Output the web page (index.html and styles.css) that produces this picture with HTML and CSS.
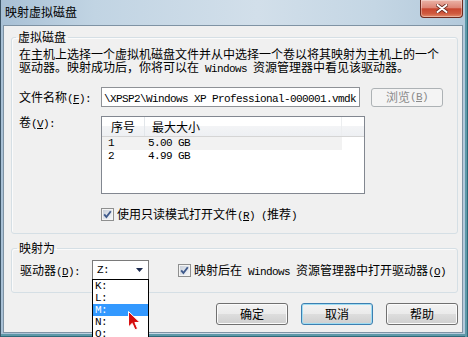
FILE: index.html
```html
<!DOCTYPE html>
<html lang="zh-CN">
<head>
<meta charset="utf-8">
<title>映射虚拟磁盘</title>
<link rel="stylesheet" href="styles.css">
</head>
<body>
<div class="window">
  <div class="titlebar">
    <span class="title">映射虚拟磁盘</span>
    <div class="close">
      <svg width="12" height="9" viewBox="0 0 12 9">
        <path d="M1.5 1 L10.5 8 M10.5 1 L1.5 8" stroke="#6a2a20" stroke-width="3.6" stroke-linecap="round"/>
        <path d="M1.5 1 L10.5 8 M10.5 1 L1.5 8" stroke="#ffffff" stroke-width="2" stroke-linecap="round"/>
      </svg>
    </div>
  </div>
  <div class="client">
    <fieldset class="group g1">
      <legend>虚拟磁盘</legend>
      <div class="desc">
        <div class="line">在主机上选择一个虚拟机磁盘文件并从中选择一个卷以将其映射为主机上的一个</div>
        <div class="line">驱动器。映射成功后，你将可以在<span class="m"> Windows </span>资源管理器中看见该驱动器。</div>
      </div>
      <div class="file-row">
        <span class="lbl">文件名称<span class="m">(<u>F</u>):</span></span>
        <div class="textbox"><span class="m">\XPSP2\Windows XP Professional-000001.vmdk</span></div>
        <div class="btn disabled browse">浏览<span class="m">(<u>B</u>)</span></div>
      </div>
      <div class="vol-row">
        <span class="lbl">卷<span class="m">(<u>V</u>):</span></span>
        <div class="listview">
          <div class="lv-head">
            <div class="c1">序号</div>
            <div class="c2">最大大小</div>
          </div>
          <div class="lv-row sel"><div class="c1 m">1</div><div class="c2 m">5.00 GB</div></div>
          <div class="lv-row"><div class="c1 m">2</div><div class="c2 m">4.99 GB</div></div>
        </div>
      </div>
      <div class="check-row ro">
        <svg class="cb" width="13" height="13" viewBox="0 0 13 13">
          <defs><linearGradient id="cbg1" x1="0" y1="0" x2="1" y2="1"><stop offset="0" stop-color="#c9d0da"/><stop offset="1" stop-color="#f4f6f9"/></linearGradient></defs>
          <rect x="0.5" y="0.5" width="12" height="12" fill="#f4f4f4" stroke="#8e8f8f"/>
          <rect x="2" y="2" width="9" height="9" fill="url(#cbg1)"/>
          <path d="M3.2 6.4 L5.4 9 L9.8 3.2" fill="none" stroke="#3f5a8c" stroke-width="1.9"/>
        </svg>
        <span>使用只读模式打开文件<span class="m">(<u>R</u>) (</span>推荐<span class="m">)</span></span>
      </div>
    </fieldset>
    <fieldset class="group g2">
      <legend>映射为</legend>
      <div class="drive-row">
        <span class="lbl2">驱动器<span class="m">(<u>D</u>):</span></span>
        <div class="combo-wrap">
          <div class="combo">
            <span class="m">Z:</span>
            <svg class="arrow" width="7" height="4" viewBox="0 0 7 4"><path d="M0 0 H7 L3.5 4 Z" fill="#1b2a4e"/></svg>
          </div>
          <ul class="dropdown">
            <li class="m">K:</li>
            <li class="m">L:</li>
            <li class="m hl">M:</li>
            <li class="m">N:</li>
            <li class="m">O:</li>
          </ul>
        </div>
        <div class="check-row open">
          <svg class="cb" width="13" height="13" viewBox="0 0 13 13">
            <defs><linearGradient id="cbg2" x1="0" y1="0" x2="1" y2="1"><stop offset="0" stop-color="#c9d0da"/><stop offset="1" stop-color="#f4f6f9"/></linearGradient></defs>
            <rect x="0.5" y="0.5" width="12" height="12" fill="#f4f4f4" stroke="#8e8f8f"/>
            <rect x="2" y="2" width="9" height="9" fill="url(#cbg2)"/>
            <path d="M3.2 6.4 L5.4 9 L9.8 3.2" fill="none" stroke="#3f5a8c" stroke-width="1.9"/>
          </svg>
          <span>映射后在<span class="m"> Windows </span>资源管理器中打开驱动器<span class="m">(<u>O</u>)</span></span>
        </div>
      </div>
    </fieldset>
    <div class="buttons">
      <div class="btn">确定</div>
      <div class="btn focus">取消</div>
      <div class="btn">帮助</div>
    </div>
  </div>
  <svg class="cursor" width="13" height="20" viewBox="0 0 13 20">
    <path d="M0.5 0.5 L0.5 16 L4.2 12.4 L7 18.8 L9.6 17.7 L6.9 11.5 L12 11.5 Z" fill="#e01818" stroke="#ffffff" stroke-width="1"/>
    <path d="M1.5 2.5 L1.5 13.5 L4.5 10.8 L7.4 17.4 L8.3 17 L5.5 10.5 L9.6 10.5 Z" fill="#c00000" opacity="0.5"/>
  </svg>
</div>
</body>
</html>
```
FILE: styles.css
```css
* { box-sizing: border-box; }
html, body { margin: 0; padding: 0; }
body {
  width: 468px;
  height: 337px;
  overflow: hidden;
  background: #ffffff;
  font-family: "Noto Sans CJK SC", sans-serif;
  font-size: 12px;
  color: #000;
}
.m {
  font-family: "Liberation Mono", "Noto Sans CJK SC", monospace;
  font-size: 11px;
  letter-spacing: -0.6px;
  line-height: 10px;
}
u { text-decoration: underline; text-underline-offset: 1px; }

.window {
  position: relative;
  width: 468px;
  height: 337px;
  display: flex;
  flex-direction: column;
  padding: 0 5px 4px 3px;
  overflow: hidden;
  background: linear-gradient(to right, #a8c0d5 0%, #c1d4e3 20%, #d2dfea 55%, #c4d6e4 80%, #b3c9db 100%);
  box-shadow: inset 1px 0 0 #3e5668, inset -1px 0 0 #2f6a79, inset -3px 0 0 #5d98a8, inset 0 -1px 0 #2f6a79, inset 0 -3px 0 #5d98a8;
}
.titlebar {
  height: 25px;
  flex: none;
  display: flex;
  justify-content: space-between;
  align-items: flex-start;
}
.title {
  padding: 5px 0 0 2px;
  line-height: 14px;
}
.close {
  width: 43px;
  height: 18px;
  display: flex;
  align-items: center;
  justify-content: center;
  border: 1px solid #6e2a1f;
  border-top: none;
  border-radius: 0 0 4px 4px;
  background: linear-gradient(#ebb3a7 0%, #dd8676 45%, #c8462f 52%, #cf5a3f 80%, #e38c6c 100%);
  box-shadow: inset 0 0 0 1px rgba(255,255,255,0.35);
}

.client {
  flex: 1;
  display: flex;
  flex-direction: column;
  border: 1px solid #7f93a4;
  background: #f0f0f0;
}

.group {
  margin: 4px 4px 0 7px;
  border: 1px solid #d5dfe5;
  border-radius: 3px;
  min-width: 0;
  box-shadow: inset 1px 1px 0 #fbfbfb;
}
.group legend {
  padding: 0 2px;
  margin-left: -3px;
  line-height: 14px;
  height: 14px;
}
.g1 { padding: 0 6px 12px 7px; }
.g2 { margin-top: 7px; padding: 0 6px 12px 8px; }

.desc {
  margin-top: 3px;
  white-space: nowrap;
}
.desc .line {
  height: 13px;
  line-height: 13px;
}

.file-row {
  display: flex;
  align-items: center;
  margin-top: 14px;
  height: 20px;
}
.lbl { width: 82px; height: 14px; line-height: 14px; flex: none; }
.textbox {
  width: 259px;
  height: 20px;
  flex: none;
  border: 1px solid #8e9196;
  background: #fff;
  padding-left: 2px;
  line-height: 18px;
  white-space: nowrap;
  overflow: hidden;
}
.btn {
  width: 72px;
  height: 22px;
  flex: none;
  display: flex;
  align-items: center;
  justify-content: center;
  border: 1px solid #707070;
  border-radius: 3px;
  background: linear-gradient(#f2f2f2 0%, #ebebeb 48%, #dddddd 52%, #cfcfcf 100%);
  box-shadow: inset 0 0 0 1px #fbfbfb;
  line-height: 14px;
}
.btn.focus {
  border-color: #3c7fb1;
  box-shadow: inset 0 0 0 1px #9fdcf2;
}
.btn.browse {
  margin-left: 11px;
  height: 19px;
}
.btn.disabled {
  color: #8a8a8a;
  border-color: #adb2b5;
  background: #f4f4f4;
  box-shadow: none;
}

.vol-row {
  display: flex;
  align-items: flex-start;
  margin-top: 9px;
  height: 78px;
}
.vol-row .lbl { margin-top: -1px; }
.listview {
  width: 264px;
  height: 78px;
  flex: none;
  border: 1px solid #828790;
  background: #fff;
}
.lv-head {
  display: flex;
  height: 20px;
  border-bottom: 1px solid #d5d5d5;
  background: linear-gradient(#ffffff 0%, #ffffff 45%, #f3f4f6 50%, #eef0f3 100%);
  line-height: 19px;
}
.lv-head .c1 { width: 43px; padding-left: 9px; border-right: 1px solid #e2e6ea; }
.lv-head .c2 { width: 197px; padding-left: 7px; border-right: 1px solid #eceef0; }
.lv-row {
  display: flex;
  width: 240px;
  height: 13px;
  line-height: 13px;
}
.lv-row.sel { background: #f2f2f2; }
.lv-row .c1 { width: 43px; padding-left: 6px; line-height: 13px; }
.lv-row .c2 { padding-left: 3px; line-height: 13px; }

.check-row {
  display: flex;
  align-items: center;
  height: 14px;
  line-height: 14px;
  white-space: nowrap;
}
.check-row .cb { flex: none; margin-right: 3px; }
.ro { margin: 13px 0 0 82px; }

.drive-row {
  display: flex;
  align-items: center;
  margin-top: 5px;
  height: 20px;
}
.lbl2 { width: 72px; height: 14px; flex: none; line-height: 14px; }
.combo-wrap {
  position: relative;
  width: 57px;
  height: 20px;
  flex: none;
}
.combo {
  height: 20px;
  display: flex;
  align-items: center;
  justify-content: space-between;
  padding: 0 5px 0 4px;
  border: 1px solid #7a7a7a;
  background: #fff;
}
.dropdown {
  position: absolute;
  z-index: 5;
  top: 19px;
  left: 0;
  width: 57px;
  height: 70px;
  margin: 0;
  padding: 0;
  list-style: none;
  border: 1px solid #000;
  background: #fff;
}
.dropdown li {
  height: 12px;
  line-height: 12px;
  padding-left: 2px;
}
.dropdown li.hl { background: #3399ff; color: #fff; }
.open { margin-left: 29px; }

.buttons {
  display: flex;
  justify-content: flex-end;
  gap: 13px;
  margin: 10px 4px 0 0;
}

.cursor {
  position: absolute;
  z-index: 10;
  left: 128px;
  top: 311px;
}
```
